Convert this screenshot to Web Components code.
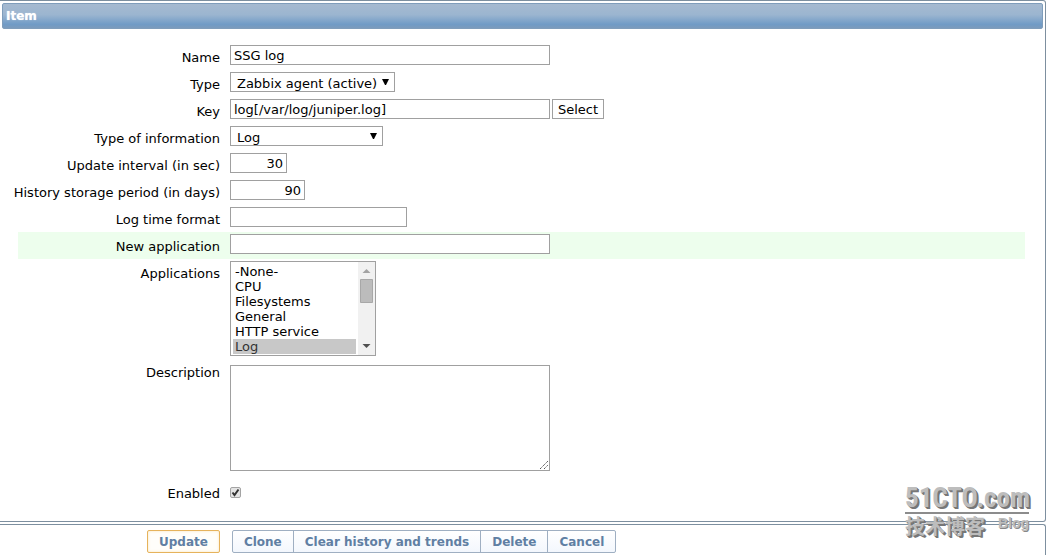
<!DOCTYPE html>
<html lang="en">
<head>
<meta charset="utf-8">
<title>Item</title>
<style>
  body { margin: 0; background: #fff; font: 13px/16px "DejaVu Sans", Verdana, sans-serif; color: #000; }
</style>
</head>
<body>
<item-page></item-page>

<template id="t-panel">
  <style>
    :host { display: block; margin-right: 2px; border: 1px solid #7d8f9f; border-left: 0; border-radius: 0 3px 3px 0; padding: 2px 2px 0; background: #fff; }
    h1 { margin: 0; padding: 0 3px; height: 24px; font: bold 12px/24px "DejaVu Sans", Verdana, sans-serif; color: #fff; border: 1px solid #7f9dbb; border-radius: 2px; background: linear-gradient(#a6bad0, #9bb5d0 45%, #709bc6 85%, #7b9bbd); text-shadow: 0 0 1px #dfe8f0; }
    .body { padding: 14px 18px 7px 16px; }
  </style>
  <h1></h1>
  <div class="body"><slot></slot></div>
</template>

<template id="t-row">
  <style>
    :host { display: grid; grid-template-columns: 202px 1fr; column-gap: 10px; padding: 2px 0 4px; }
    :host([highlight]) { background: #edfeed; }
    ::slotted(label) { justify-self: end; padding-top: 5px; white-space: nowrap; }
    .field { display: flex; align-items: flex-start; gap: 2px; }
  </style>
  <slot name="label"></slot>
  <div class="field"><slot></slot></div>
</template>

<template id="t-bar">
  <style>
    :host { display: flex; gap: 12px; margin: 2px 2px 0 0; border: 1px solid #7d8f9f; border-left: 0; border-bottom: 0; border-radius: 0 3px 0 0; padding: 5px 0 2px 147px; }
    div { display: flex; }
    button { box-sizing: border-box; height: 23px; margin: 0; padding: 0 11px; border: 1px solid #9fafc2; border-radius: 0; background: linear-gradient(#fff, #f3f7fd); color: #607fa3; font: bold 12px/20px "DejaVu Sans", Verdana, sans-serif; white-space: nowrap; }
    .main button { border-color: #e6b35c; border-radius: 2px; background: #fffefa; box-shadow: inset 0 0 3px #f9e6bf; }
    .others button + button { margin-left: -1px; }
    .others button:first-child { border-radius: 2px 0 0 2px; }
    .others button:last-child { border-radius: 0 2px 2px 0; }
  </style>
  <div class="main"><button type="submit">Update</button></div>
  <div class="others">
    <button type="button">Clone</button>
    <button type="button">Clear history and trends</button>
    <button type="button">Delete</button>
    <button type="button">Cancel</button>
  </div>
</template>

<template id="t-mark">
  <style>
    :host { display: block; width: 124px; color: #bdbdbd; text-shadow: 1px 1px 0 #777, 2px 2px 0 #777; font-weight: bold; pointer-events: none; }
    .top { font: bold 27px/28px "Roboto Condensed", "Open Sans Condensed", "Noto Sans CJK SC", sans-serif; border-bottom: 2px solid #8c8c8c; white-space: nowrap; }
    .sub { display: flex; justify-content: space-between; align-items: flex-start; font: bold 20px/24px "Noto Sans CJK SC", sans-serif; }
    .blog { font: bold 14px/18px "Liberation Sans", sans-serif; text-shadow: 1px 1px 0 #888; }
  </style>
  <div class="top">51CTO.com</div>
  <div class="sub"><span>技术博客</span><span class="blog">Blog</span></div>
</template>

<template id="t-page">
  <style>
    :host { display: block; position: relative; }
    input, select, textarea, .pick { box-sizing: border-box; height: 20px; margin: 0; border: 1px solid #a0a0a0; border-radius: 0; background: #fff; color: #000; font: inherit; padding: 0 3px; }
    .wide { width: 320px; }
    .mid { width: 177px; }
    .num { text-align: right; }
    .n1 { width: 57px; }
    .n2 { width: 75px; }
    .drop { appearance: none; padding: 3px 16px 0 6px; background: #fff url("data:image/svg+xml,%3Csvg xmlns='http://www.w3.org/2000/svg' width='7' height='6'%3E%3Cpath d='M0 0H7L4 6H3Z'/%3E%3C/svg%3E") no-repeat right 5px top 6px; }
    .t1 { width: 165px; }
    .t2 { width: 153px; }
    .pick { width: 52px; padding: 1px 0 0; text-align: center; line-height: 16px; }
    .list { box-sizing: border-box; display: flex; width: 146px; height: 95px; margin-bottom: 3px; border: 1px solid #a0a0a0; }
    .list select { flex: 1; min-width: 0; height: auto; border: 0; padding: 2px; overflow: hidden; scrollbar-width: none; outline: 0; }
    .list option { min-height: 15px; height: 15px; line-height: 15px; padding: 0 2px; }
    .list option:checked { background: #c8c8c8 linear-gradient(#c8c8c8, #c8c8c8); color: #333; }
    .list svg { flex: none; }
    textarea { display: block; height: 106px; resize: none; }
    .area { display: grid; }
    .area > * { grid-area: 1 / 1; }
    .area svg { place-self: end; margin: 2px; }
    .check { appearance: none; width: 11px; height: 11px; margin: 10px 0 12px; padding: 0; border: 1px solid #a4a4a4; border-radius: 2px; background: #e4e4e4 url("data:image/svg+xml,%3Csvg xmlns='http://www.w3.org/2000/svg' width='9' height='9'%3E%3Cpath d='M1.5 4.5L3.5 7L7.5 1.5' fill='none' stroke='%23333' stroke-width='2'/%3E%3C/svg%3E") center no-repeat; }
    label.high { padding-top: 0; }
    label.low { padding-top: 9px; }
    mark-logo { position: absolute; right: 19px; bottom: 17px; }
  </style>
  <form>
    <item-panel heading="Item">
      <form-row><label slot="label" for="name">Name</label><input class="wide" id="name" value="SSG log"></form-row>
      <form-row><label slot="label" for="type">Type</label><select class="drop t1" id="type"><option>Zabbix agent (active)</option></select></form-row>
      <form-row><label slot="label" for="key">Key</label><input class="wide" id="key" value="log[/var/log/juniper.log]"><button type="button" class="pick">Select</button></form-row>
      <form-row><label slot="label" for="info">Type of information</label><select class="drop t2" id="info"><option>Log</option></select></form-row>
      <form-row><label slot="label" for="delay">Update interval (in sec)</label><input class="num n1" id="delay" value="30"></form-row>
      <form-row><label slot="label" for="history">History storage period (in days)</label><input class="num n2" id="history" value="90"></form-row>
      <form-row><label slot="label" for="format">Log time format</label><input class="mid" id="format"></form-row>
      <form-row highlight><label slot="label" for="newapp">New application</label><input class="wide" id="newapp"></form-row>
      <form-row><label slot="label" for="apps">Applications</label>
        <div class="list">
          <select id="apps" multiple size="6"><option>-None-</option><option>CPU</option><option>Filesystems</option><option>General</option><option>HTTP service</option><option selected>Log</option></select>
          <svg width="17" height="93" aria-hidden="true"><path fill="#f1f1f1" d="M0 0h17v93H0z"/><path fill="#a3a3a3" d="M4.500 11l4-4 4 4z"/><path fill="#bcbcbc" stroke="#a8a8a8" d="M2.500 17.500h12v23h-12z"/><path fill="#505050" d="M4.500 82l4 4 4-4z"/></svg>
        </div>
      </form-row>
      <form-row><label slot="label" class="high" for="desc">Description</label>
        <div class="area"><textarea class="wide" id="desc"></textarea><svg width="8" height="8" aria-hidden="true"><path d="M0 8L8 0M4 8L8 4" stroke="#555" stroke-dasharray="1.400 .6"/></svg></div>
      </form-row>
      <form-row><label slot="label" class="low" for="enabled">Enabled</label><input class="check" type="checkbox" id="enabled" checked></form-row>
    </item-panel>
    <button-bar></button-bar>
  </form>
  <mark-logo></mark-logo>
</template>

<script>
  class Base extends HTMLElement {
    constructor() {
      super();
      this.attachShadow({ mode: "open" }).append(document.getElementById(this.constructor.tpl).content.cloneNode(true));
    }
  }
  customElements.define("form-row", class extends Base { static tpl = "t-row"; });
  customElements.define("button-bar", class extends Base { static tpl = "t-bar"; });
  customElements.define("mark-logo", class extends Base { static tpl = "t-mark"; });
  customElements.define("item-panel", class extends Base {
    static tpl = "t-panel";
    connectedCallback() { this.shadowRoot.querySelector("h1").textContent = this.getAttribute("heading"); }
  });
  customElements.define("item-page", class extends Base { static tpl = "t-page"; });
</script>
</body>
</html>
